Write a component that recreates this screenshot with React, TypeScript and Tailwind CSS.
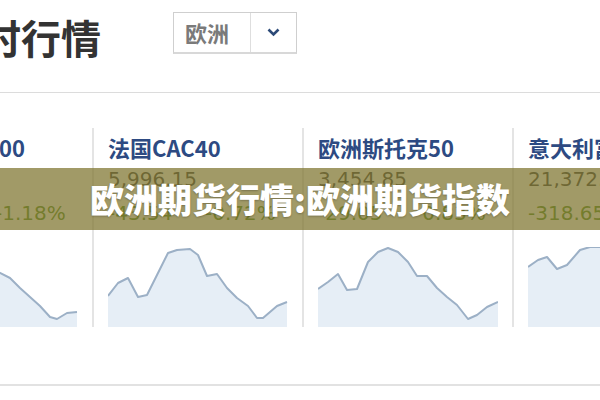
import React from 'react';

interface IndexCard {
  name: string;
  value: string;
  change: string;
  percent: string;
  line: [number, number][];
}

const cards: IndexCard[] = [
  {
    name: '英国富时100',
    value: '7,404.98',
    change: '-88.37',
    percent: '-1.18%',
    line: [
      [0, 40], [10, 30], [20, 25], [30, 38], [40, 35], [50, 20], [60, 8], [70, 5], [80, 10], [92, 20],
      [102, 26], [112, 31], [122, 41], [132, 50], [142, 59], [152, 70], [159, 72], [169, 66], [179, 65],
    ],
  },
  {
    name: '法国CAC40',
    value: '5,996.15',
    change: '-43.54',
    percent: '-0.72%',
    line: [
      [0, 49], [10, 36], [20, 31], [30, 50], [39, 48], [49, 28], [60, 6], [69, 3], [82, 2], [90, 8],
      [99, 29], [109, 27], [119, 41], [129, 51], [140, 59], [149, 71], [155, 71], [169, 59], [179, 55],
    ],
  },
  {
    name: '欧洲斯托克50',
    value: '3,454.85',
    change: '-29.05',
    percent: '-0.83%',
    line: [
      [0, 42], [10, 35], [20, 27], [29, 43], [39, 42], [50, 15], [60, 5], [70, 1], [80, 5], [90, 15],
      [99, 29], [109, 29], [119, 41], [129, 50], [139, 58], [150, 72], [159, 68], [169, 60], [180, 55],
    ],
  },
  {
    name: '意大利富时MIB',
    value: '21,372.40',
    change: '-318.65',
    percent: '-1.47%',
    line: [
      [0, 20], [10, 13], [19, 10], [29, 22], [39, 18], [52, 3], [62, 0], [72, 0], [82, 4], [92, 14],
      [101, 28], [111, 28], [121, 40], [131, 50], [141, 58], [152, 70], [161, 66], [171, 58], [180, 54],
    ],
  },
];

const Sparkline: React.FC<{ points: [number, number][] }> = ({ points }) => {
  const line = points.map(([x, y]) => `${x},${y}`).join(' ');
  const last = points[points.length - 1];
  const area = `0,80 ${line} ${last[0]},80`;
  return (
    <svg width="180" height="80" viewBox="0 0 180 80" className="block">
      <polygon points={area} fill="#e6eef6" />
      <polyline points={line} fill="none" stroke="#9cb0c6" strokeWidth="2" strokeLinejoin="round" />
    </svg>
  );
};

export default function App() {
  return (
    <div
      className="relative w-[600px] h-[400px] overflow-hidden bg-white"
      style={{ fontFamily: '"Noto Sans CJK SC", "Noto Sans", sans-serif' }}
    >
      {/* page header */}
      <div className="flex items-start h-[93px] border-b border-[#dcdcdc]">
        <h1 className="ml-[-59px] mt-[17px] text-[40px] leading-none font-semibold text-[#333] whitespace-nowrap">
          实时行情
        </h1>
        <div className="ml-[72px] mt-[12px] flex h-[42px] w-[124px] border border-[#cfcfcf] border-b-2 border-b-[#d8d8d8] bg-white">
          <div className="flex w-[77px] items-center border-r border-[#dedede] pl-[11px] text-[22px] font-bold text-[#7a7a7a]">
            欧洲
          </div>
          <div className="flex flex-1 items-center justify-center">
            <svg width="13" height="9" viewBox="0 0 13 9">
              <polyline points="1.5,1.5 6.5,6.5 11.5,1.5" fill="none" stroke="#2c4a78" strokeWidth="2.6" />
            </svg>
          </div>
        </div>
      </div>

      {/* index cards */}
      <div className="ml-[-118px] mt-[35px] flex">
        {cards.map((card) => (
          <div key={card.name} className="w-[210px] shrink-0 border-l-2 border-[#e4e4e4] pl-[14px] pt-[6px]">
            <div className="text-[22px] leading-[26px] font-bold text-[#2d4a82] whitespace-nowrap">{card.name}</div>
            <div
              className="mt-[6px] text-[20px] leading-[26px] text-[#4a4a4a] whitespace-nowrap"
              style={{ fontFamily: '"DejaVu Sans", sans-serif' }}
            >
              {card.value}
            </div>
            <div
              className="mt-[8px] flex text-[20px] leading-[26px] text-[#5f9430] whitespace-nowrap"
              style={{ fontFamily: '"DejaVu Sans", sans-serif' }}
            >
              <span className="w-[97px]">{card.change}</span>
              <span>{card.percent}</span>
            </div>
            <div className="mt-[21px]">
              <Sparkline points={card.line} />
            </div>
          </div>
        ))}
      </div>

      <div className="mt-[57px] border-t-2 border-[#e2e2e2]" />

      {/* title banner */}
      <div className="absolute left-0 right-0 top-[168px] flex h-[62px] items-center justify-center bg-[rgba(125,115,45,0.72)]">
        <span className="text-[34px] font-black text-white leading-none whitespace-nowrap [text-shadow:0_1px_2px_rgba(0,0,0,0.25)]">
          欧洲期货行情:欧洲期货指数
        </span>
      </div>
    </div>
  );
}
